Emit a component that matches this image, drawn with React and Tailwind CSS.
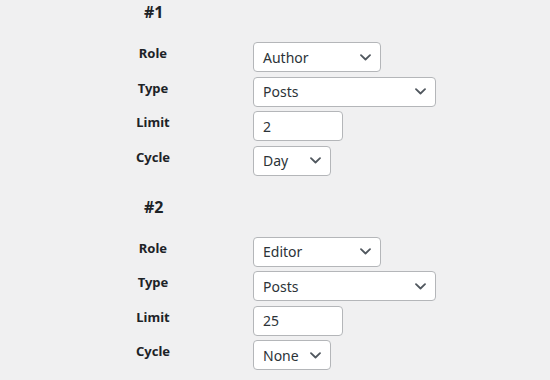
import React from "react";

const groups = [
  { title: "#1", role: "Author", type: "Posts", limit: "2", cycle: "Day" },
  { title: "#2", role: "Editor", type: "Posts", limit: "25", cycle: "None" },
];

const Chevron = () => (
  <svg width="11" height="7" viewBox="0 0 11 7" className="shrink-0">
    <polyline
      points="1,1.2 5.5,5.5 10,1.2"
      fill="none"
      stroke="#50575e"
      strokeWidth="1.8"
      strokeLinecap="round"
      strokeLinejoin="round"
    />
  </svg>
);

// fake select box, wp-admin look
const Select = ({ value, width }) => (
  <div
    className={`${width} h-[30px] flex items-center justify-between bg-white border border-[#b4b6b9] rounded-[4px] pl-[9px] pr-[9px] text-[14px] text-[#2c3338]`}
  >
    <span>{value}</span>
    <Chevron />
  </div>
);

const Field = ({ label, children }) => (
  <>
    <div className="text-center text-[13px] font-bold leading-[20px] pt-[1px] text-[#1d2327]">
      {label}
    </div>
    <div>{children}</div>
  </>
);

const Group = ({ g, first }) => (
  <div className={first ? "" : "mt-[19px]"}>
    {/* heading */}
    <h2 className="pl-[24px] text-[16px] font-bold leading-[24px] text-[#1d2327]">
      {g.title}
    </h2>
    <div className="mt-[18px] grid grid-cols-[66px_1fr] gap-x-[67px] gap-y-[4.5px]">
      <Field label="Role">
        <Select value={g.role} width="w-[128px]" />
      </Field>
      <Field label="Type">
        <Select value={g.type} width="w-[183px]" />
      </Field>
      <Field label="Limit">
        <div className="w-[90px] h-[30px] flex items-center bg-white border border-[#b4b6b9] rounded-[4px] pl-[9px] text-[14px] text-[#2c3338]">
          {g.limit}
        </div>
      </Field>
      <Field label="Cycle">
        <Select value={g.cycle} width="w-[78px]" />
      </Field>
    </div>
  </div>
);

const App = () => {
  return (
    <div
      className="w-[550px] h-[380px] overflow-hidden bg-[#f0f0f1] pl-[120px]"
      style={{ fontFamily: '"Noto Sans", "Open Sans", sans-serif' }}
    >
      {groups.map((g, i) => (
        <Group key={g.title} g={g} first={i === 0} />
      ))}
    </div>
  );
};

export default App;
